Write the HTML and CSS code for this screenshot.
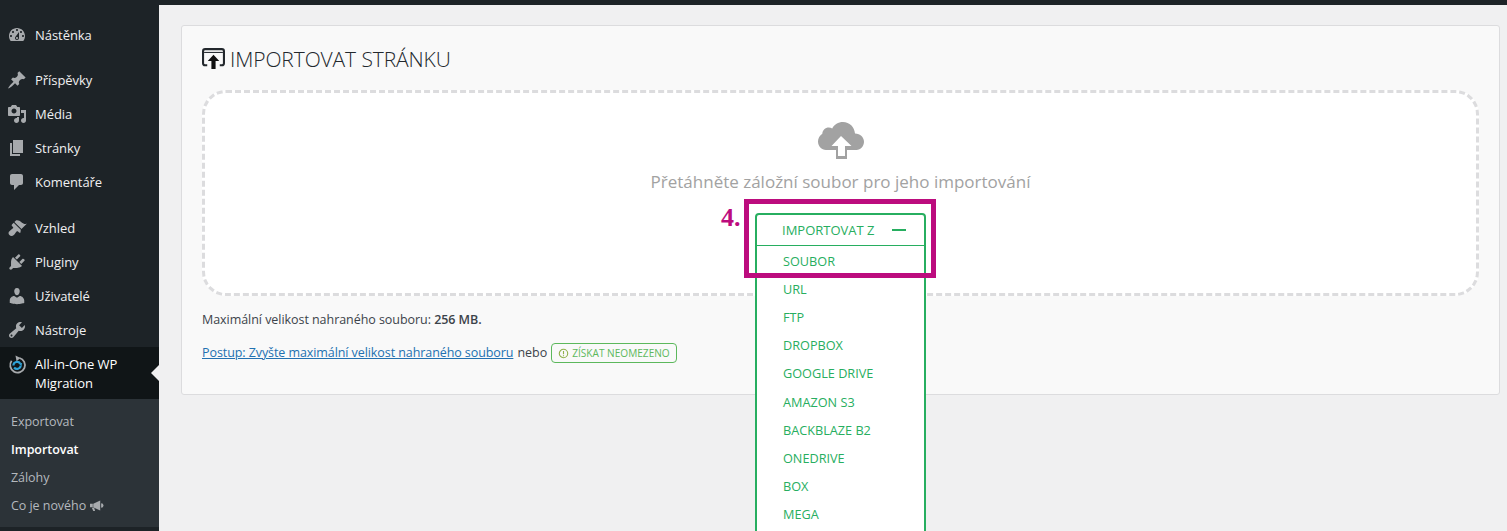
FILE: index.html
```html
<!DOCTYPE html>
<html lang="cs">
<head>
<meta charset="utf-8">
<title>Importovat stránku</title>
<link rel="stylesheet" href="styles.css">
</head>
<body>
<div class="topbar"></div>
<div class="layout">
  <nav class="sidebar">
    <ul class="menu">
      <li class="item"><svg class="ico" viewBox="0 0 20 20"><path d="M3.76 16h12.48c1.1-1.37 1.76-3.11 1.76-5 0-4.42-3.58-8-8-8s-8 3.58-8 8c0 1.89.66 3.63 1.76 5zM10 4c.55 0 1 .45 1 1s-.45 1-1 1-1-.45-1-1 .45-1 1-1zM6 6c.55 0 1 .45 1 1s-.45 1-1 1-1-.45-1-1 .45-1 1-1zm8 0c.55 0 1 .45 1 1s-.45 1-1 1-1-.45-1-1 .45-1 1-1zm-5.37 5.55L12 7v6c0 1.1-.9 2-2 2s-2-.9-2-2c0-.57.24-1.08.63-1.45zM4 10c.55 0 1 .45 1 1s-.45 1-1 1-1-.45-1-1 .45-1 1-1zm12 0c.55 0 1 .45 1 1s-.45 1-1 1-1-.45-1-1 .45-1 1-1zm-5 3c0-.55-.45-1-1-1s-1 .45-1 1 .45 1 1 1 1-.45 1-1z" fill-rule="evenodd"/></svg><span>Nástěnka</span></li>
    </ul>
    <ul class="menu">
      <li class="item"><svg class="ico" viewBox="0 0 20 20"><path d="M10.44 3.02l1.82-1.82 6.36 6.35-1.83 1.82c-1.05-.68-2.48-.57-3.41.36l-.75.75c-.92.93-1.04 2.35-.35 3.41l-1.83 1.82-2.41-2.41-2.8 2.79c-.42.42-3.38 2.71-3.8 2.29s1.86-3.39 2.28-3.81l2.79-2.79L4.1 9.36l1.83-1.82c1.05.69 2.48.57 3.4-.36l.75-.75c.93-.92 1.05-2.35.36-3.41z"/></svg><span>Příspěvky</span></li>
      <li class="item"><svg class="ico" viewBox="0 0 20 20"><path d="M13 11V4c0-.55-.45-1-1-1h-1.67L9 1H5L3.67 3H2c-.55 0-1 .45-1 1v7c0 .55.45 1 1 1h10c.55 0 1-.45 1-1zM7 4.5c1.38 0 2.5 1.12 2.5 2.5S8.38 9.5 7 9.5 4.5 8.38 4.5 7 5.62 4.5 7 4.5zM14 6h5v10.5c0 1.38-1.12 2.5-2.5 2.5S14 17.88 14 16.5s1.12-2.5 2.5-2.5c.17 0 .34.02.5.05V9h-3V6zm-4 8.05V13h2v3.5c0 1.38-1.12 2.5-2.5 2.5S7 17.88 7 16.5 8.12 14 9.5 14c.17 0 .34.02.5.05z" fill-rule="evenodd"/></svg><span>Média</span></li>
      <li class="item"><svg class="ico" viewBox="0 0 20 20"><path d="M6 15V2h10v13H6zm-1 1h8v2H3V5h2v11z"/></svg><span>Stránky</span></li>
      <li class="item"><svg class="ico" viewBox="0 0 20 20"><path d="M5 2h9c1.1 0 2 .9 2 2v7c0 1.1-.9 2-2 2h-2l-5 5v-5H5c-1.1 0-2-.9-2-2V4c0-1.1.9-2 2-2z"/></svg><span>Komentáře</span></li>
    </ul>
    <ul class="menu menu-b">
      <li class="item"><svg class="ico" viewBox="0 0 20 20"><path d="M14.48 11.06L7.41 3.99l1.5-1.5c.5-.56 2.3-.47 3.51.32 1.21.8 1.43 1.28 2.91 2.1 1.18.64 2.45 1.26 4.45.85zm-.71.71L6.7 4.7 4.93 6.47c-.39.39-.39 1.02 0 1.41l1.06 1.06c.39.39.39 1.03 0 1.42-.6.6-1.43 1.11-2.21 1.69-.35.26-.7.53-1.01.84C1.43 13.71.96 15.65 2.39 17.08s3.36.96 4.7-.37c.31-.31.58-.66.84-1.01.58-.78 1.09-1.61 1.69-2.21.39-.39 1.02-.39 1.41 0l1.06 1.06c.39.39 1.02.39 1.41 0z"/></svg><span>Vzhled</span></li>
      <li class="item"><svg class="ico" viewBox="0 0 20 20"><path d="M13.11 4.36L9.87 7.6 8 5.73l3.24-3.24c.35-.34 1.05-.2 1.56.32.52.51.66 1.21.31 1.55zm-8 1.77l.91-1.12 9.01 9.01-1.19.84c-.71.71-2.63 1.16-3.82 1.16H6.14L4.9 17.26c-.59.59-1.54.59-2.12 0-.59-.58-.59-1.53 0-2.12l1.24-1.24v-3.88c0-1.13.4-3.19 1.09-3.89zm7.26 3.97l3.24-3.24c.34-.35 1.04-.21 1.55.31.52.51.66 1.21.31 1.55l-3.24 3.25z"/></svg><span>Pluginy</span></li>
      <li class="item"><svg class="ico" viewBox="0 0 20 20"><path d="M10 9.25c-2.27 0-2.73-3.44-2.73-3.44C7 4.02 7.82 2 9.97 2c2.16 0 2.98 2.02 2.71 3.81 0 0-.41 3.44-2.68 3.44zm0 2.57L12.72 10c2.39 0 4.52 2.33 4.52 4.53v2.49s-3.65 1.13-7.24 1.13c-3.65 0-7.24-1.13-7.24-1.13v-2.49c0-2.25 1.94-4.48 4.47-4.48z"/></svg><span>Uživatelé</span></li>
      <li class="item"><svg class="ico" viewBox="0 0 20 20"><path d="M16.68 9.77c-1.34 1.34-3.3 1.67-4.95.99l-5.41 6.52c-.99.99-2.59.99-3.58 0s-.99-2.59 0-3.57l6.52-5.42c-.68-1.65-.35-3.61.99-4.95 1.28-1.28 3.12-1.62 4.72-1.06l-2.89 2.89 2.82 2.82 2.86-2.87c.53 1.58.18 3.39-1.08 4.65zM3.81 16.21c.4.39 1.04.39 1.43 0 .4-.4.4-1.04 0-1.43-.39-.4-1.03-.4-1.43 0-.39.39-.39 1.03 0 1.43z" fill-rule="evenodd"/></svg><span>Nástroje</span></li>
      <li class="item current"><svg class="ico aio" viewBox="0 0 20 20"><path class="aio-ring" d="M4.600 5.800A7.400 7.400 0 1 0 12.500 3"/><path class="aio-head" d="M8.500 0.500l5 2.500-4 3.300z"/><path class="aio-inner" d="M6.400 10.500a3.700 3.700 0 0 1 6.900-1.800"/><path class="aio-inner" d="M13.700 10.500a3.700 3.700 0 0 1-6.600 2"/><path class="aio-tip" d="M11.500 8.500l3.600-.6-.6 3z"/></svg><span>All-in-One WP Migration</span></li>
    </ul>
    <ul class="submenu">
      <li>Exportovat</li>
      <li class="sub-current">Importovat</li>
      <li>Zálohy</li>
      <li>Co je nového <svg class="mega" viewBox="0 0 16 14"><path d="M1 5h3v4H1zM4.500 5 12 1.500v11L4.500 9zM3 9.500h2.500l1 3.500H4.500z"/><path d="M13 4.500a2.500 2.500 0 0 1 0 5z"/></svg></li>
    </ul>
  </nav>
  <main class="content">
    <section class="card">
      <h1 class="title">
        <svg class="title-ico" viewBox="0 0 22 20"><rect class="win" x="1" y="1" width="20" height="15.500" rx="2"/><path class="win-bar" d="M2 4.200h18"/><path class="win-gap" d="M5 20V11.500l6-6 6 6V20z"/><path class="win-arrow" d="M11 6.500l-5.500 6h3.500V20h4v-7.500h3.500z"/></svg>
        IMPORTOVAT STRÁNKU
      </h1>
      <div class="drop">
        <svg class="cloud" viewBox="0 0 46 37"><path d="M37 11.500C36.500 5 31.500 0 25 0c-4.800 0-8.800 2.600-10.800 6.500-1-.6-2.200-.9-3.400-.9-3.500 0-6.300 2.700-6.500 6.200C1.800 13.500 0 16.300 0 19.500 0 24 3.600 28 8 28H38.500c4.200 0 7.500-4 7.500-8.300s-3.600-8-9-8.200z"/><path d="M18 26h11v11H18z"/><path class="cloud-arrow" d="M23 14 13.500 24H20v10h7V24h6.500z"/></svg>
        <p class="drop-text">Přetáhněte záložní soubor pro jeho importování</p>
        <div class="dropdown">
          <div class="dd-head"><span>IMPORTOVAT Z</span><i class="dd-minus"></i></div>
          <ul class="dd-list">
            <li>SOUBOR</li><li>URL</li><li>FTP</li><li>DROPBOX</li><li>GOOGLE DRIVE</li><li>AMAZON S3</li><li>BACKBLAZE B2</li><li>ONEDRIVE</li><li>BOX</li><li>MEGA</li>
          </ul>
        </div>
        <div class="mark"></div>
        <div class="mark-num">4.</div>
      </div>
      <p class="limit">Maximální velikost nahraného souboru: <strong>256 MB.</strong></p>
      <p class="howto"><a href="#">Postup: Zvyšte maximální velikost nahraného souboru</a> nebo <span class="badge"><svg class="badge-ico" viewBox="0 0 12 12"><circle cx="6" cy="6" r="4.600"/><path d="M6 3.200v3.600M6 7.900v1.100"/></svg>ZÍSKAT NEOMEZENO</span></p>
    </section>
  </main>
</div>
</body>
</html>
```
FILE: styles.css
```css
* { box-sizing: border-box; }
html, body { margin: 0; height: 531px; overflow: hidden; }
body { font-family: "Open Sans", "Liberation Sans", sans-serif; font-size: 13px; color: #3c434a; background: #f0f0f1; }
ul { list-style: none; margin: 0; padding: 0; }
.topbar { height: 5px; background: #1d2327; }
.layout { display: flex; height: 526px; }
.sidebar { width: 159px; flex: none; background: #1d2327; padding-top: 13px; }
.menu { margin-bottom: 11px; }
.menu-b { margin-top: 12px; margin-bottom: 0; }
.item { display: flex; align-items: center; height: 34px; color: #f0f0f1; position: relative; letter-spacing: -0.05px; }
.item span { margin-left: 8px; }
.ico { width: 20px; height: 20px; margin-left: 7px; fill: #a7aaad; flex: none; }
.current { height: 52px; background: #101517; color: #fff; align-items: flex-start; padding-top: 8px; line-height: 20px; }
.current span { line-height: 19px; margin-right: 20px; }
.current .ico { margin-top: 0; }
.current::after { content: ""; position: absolute; right: 0; top: 18px; border: 8px solid transparent; border-right-color: #f0f0f1; border-left-width: 0; }
.aio { fill: none; }
.aio-ring { fill: none; stroke: #a7aaad; stroke-width: 1.800; }
.aio-head { fill: #a7aaad; }
.aio-inner { fill: none; stroke: #2ea2d8; stroke-width: 2.200; }
.aio-tip { fill: #2ea2d8; }
.submenu { background: #2c3338; padding: 8px 0; height: 128px; color: #b4b9be; font-size: 12.500px; letter-spacing: -0.05px; }
.submenu li { height: 28px; padding-left: 11px; display: flex; align-items: center; gap: 3px; }
.submenu .sub-current { color: #fff; font-weight: 600; }
.mega { width: 15px; height: 13px; fill: #a7aaad; }
.content { flex: 1; padding: 20px 7px 0 22px; position: relative; }
.card { height: 370px; background: #f9f9f9; border: 1px solid #dcdcde; border-radius: 3px; padding: 0 20px; }
.title { margin: 0; padding-top: 19px; height: 64px; font-size: 21px; font-weight: 300; line-height: 28px; color: #23282d; display: flex; align-items: flex-start; gap: 5px; letter-spacing: -0.1px; }
.title-ico { width: 23px; height: 21px; margin-top: 3px; flex: none; }
.win { fill: none; stroke: #23282d; stroke-width: 2; }
.win-bar { stroke: #23282d; stroke-width: 1; }
.win-gap { fill: #f9f9f9; }
.win-arrow { fill: #111; }
.drop { position: relative; height: 206px; background: #fff; border: 3px dashed #dcdcde; border-radius: 24px; display: flex; flex-direction: column; align-items: center; padding-top: 28px; }
.cloud { width: 46px; height: 37px; fill: #a2a2a2; display: block; margin-top: 1px; flex: none; }
.cloud-arrow { fill: #fff; }
.drop-text { margin: 12px 0 0; font-size: 17px; line-height: 22px; color: #a2a2a2; }
.dropdown { position: absolute; left: 550px; top: 120px; width: 171px; height: 340px; background: #fff; border: 2px solid #27ae60; border-radius: 4px; color: #27ae60; font-size: 12.700px; z-index: 2; }
.dd-head { height: 31px; border-bottom: 1px solid #27ae60; display: flex; align-items: center; padding-left: 25px; gap: 17px; font-size: 13px; }
.dd-minus { width: 14px; height: 2px; background: #27ae60; }
.dd-list li { height: 28.120px; padding-left: 26px; display: flex; align-items: center; position: relative; top: 1px; }
.mark { position: absolute; left: 539px; top: 106px; width: 192px; height: 79px; border: 5px solid #bc0c7e; z-index: 3; }
.mark-num { position: absolute; left: 516px; top: 111px; font-family: "Liberation Serif", serif; font-weight: 700; font-size: 26px; line-height: 28px; color: #bc0c7e; z-index: 3; }
.limit { margin: 15px 0 0; line-height: 18px; font-size: 12.500px; letter-spacing: -0.05px; }
.limit strong { font-weight: 600; }
.howto { margin: 14px 0 0; line-height: 18px; font-size: 12.500px; display: flex; align-items: center; gap: 4px; }
.howto a { color: #2271b1; letter-spacing: -0.08px; }
.badge { display: inline-flex; align-items: center; gap: 3px; height: 20px; padding: 0 6px; border: 1px solid #5cb85c; border-radius: 4px; color: #5cb85c; font-size: 10.100px; }
.badge-ico { width: 11px; height: 11px; fill: none; stroke: #8fb04a; stroke-width: 1.200; }
```
